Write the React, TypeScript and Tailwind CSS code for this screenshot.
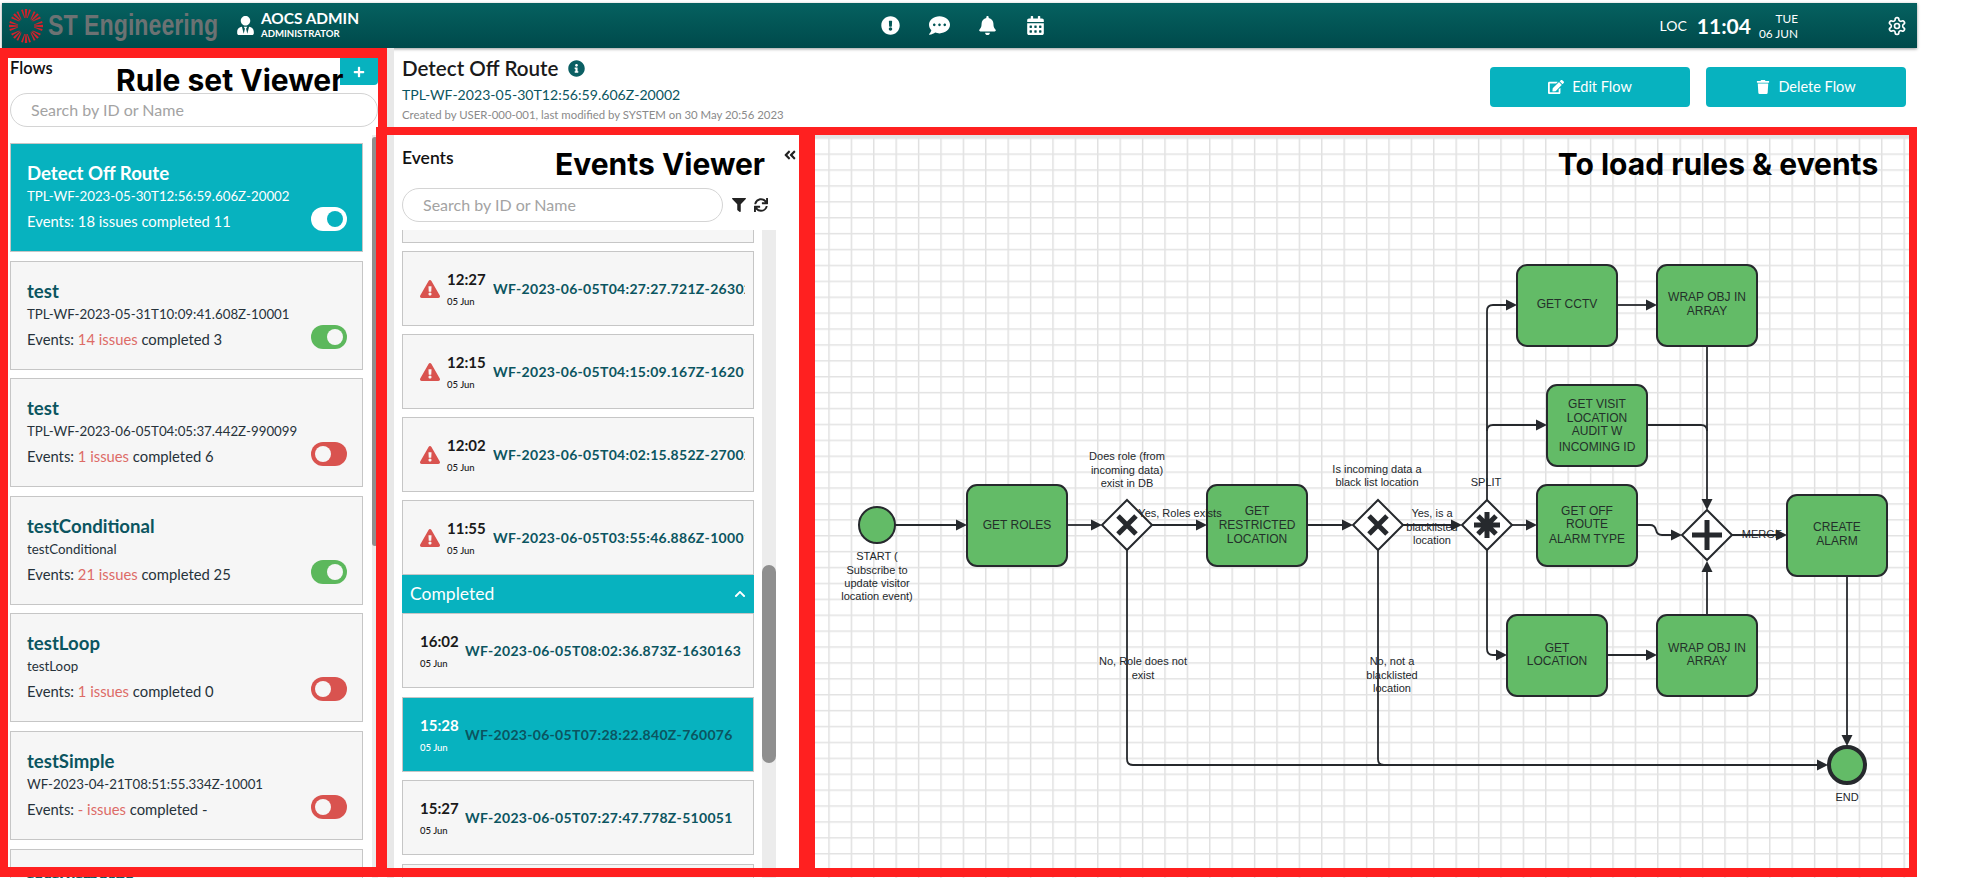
import { FaAngleDoubleLeft, FaBell, FaCalendarAlt, FaChevronUp, FaCommentDots, FaEdit, FaExclamationCircle, FaExclamationTriangle, FaFilter, FaInfoCircle, FaPlus, FaSync, FaTrash, FaUserTie } from "react-icons/fa";
import { LuSettings } from "react-icons/lu";

type Flow = {
  title: string;
  id: string;
  issues: string;
  completed: string;
  on: boolean;
  active?: boolean;
};

const flows: Flow[] = [
  { title: "Detect Off Route", id: "TPL-WF-2023-05-30T12:56:59.606Z-20002", issues: "18", completed: "11", on: true, active: true },
  { title: "test", id: "TPL-WF-2023-05-31T10:09:41.608Z-10001", issues: "14", completed: "3", on: true },
  { title: "test", id: "TPL-WF-2023-06-05T04:05:37.442Z-990099", issues: "1", completed: "6", on: false },
  { title: "testConditional", id: "testConditional", issues: "21", completed: "25", on: true },
  { title: "testLoop", id: "testLoop", issues: "1", completed: "0", on: false },
  { title: "testSimple", id: "WF-2023-04-21T08:51:55.334Z-10001", issues: "-", completed: "-", on: false },
  { title: "testBitmerge", id: "testBitmerge", issues: "1", completed: "0", on: false },
];

const issueEvents = [
  { time: "12:27", id: "WF-2023-06-05T04:27:27.721Z-26302" },
  { time: "12:15", id: "WF-2023-06-05T04:15:09.167Z-16201" },
  { time: "12:02", id: "WF-2023-06-05T04:02:15.852Z-27002" },
  { time: "11:55", id: "WF-2023-06-05T03:55:46.886Z-10001" },
];

const doneEvents = [
  { time: "16:02", id: "WF-2023-06-05T08:02:36.873Z-1630163" },
  { time: "15:28", id: "WF-2023-06-05T07:28:22.840Z-760076", active: true },
  { time: "15:27", id: "WF-2023-06-05T07:27:47.778Z-510051" },
  { time: "15:27", id: "WF-2023-06-05T07:27:11.204Z-510050" },
];

const boxes = [
  { x: 967, y: 485, h: 81, w: 100, lines: ["GET ROLES"], ys: [525] },
  { x: 1207, y: 485, h: 81, w: 100, lines: ["GET", "RESTRICTED", "LOCATION"], ys: [511, 525, 539] },
  { x: 1517, y: 265, h: 81, w: 100, lines: ["GET CCTV"], ys: [304] },
  { x: 1657, y: 265, h: 81, w: 100, lines: ["WRAP OBJ IN", "ARRAY"], ys: [297, 311] },
  { x: 1547, y: 385, h: 81, w: 100, lines: ["GET VISIT", "LOCATION", "AUDIT W", "INCOMING ID"], ys: [404, 418, 431, 447] },
  { x: 1537, y: 485, h: 81, w: 100, lines: ["GET OFF", "ROUTE", "ALARM TYPE"], ys: [511, 524, 539] },
  { x: 1507, y: 615, h: 81, w: 100, lines: ["GET", "LOCATION"], ys: [648, 661] },
  { x: 1657, y: 615, h: 81, w: 100, lines: ["WRAP OBJ IN", "ARRAY"], ys: [648, 661] },
  { x: 1787, y: 495, h: 81, w: 100, lines: ["CREATE", "ALARM"], ys: [527, 541] },
];

const labels = [
  { x: 877, ys: [556, 570, 583, 596], lines: ["START (", "Subscribe to", "update visitor", "location event)"] },
  { x: 1127, ys: [456, 470, 483], lines: ["Does role (from", "incoming data)", "exist in DB"] },
  { x: 1180, ys: [513], lines: ["Yes, Roles exists"] },
  { x: 1143, ys: [661, 675], lines: ["No, Role does not", "exist"] },
  { x: 1377, ys: [469, 482], lines: ["Is incoming data a", "black list location"] },
  { x: 1392, ys: [661, 675, 688], lines: ["No, not a", "blacklisted", "location"] },
  { x: 1432, ys: [513, 527, 540], lines: ["Yes, is a", "blacklisted", "location"] },
  { x: 1486, ys: [482], lines: ["SPLIT"] },
  { x: 1762, ys: [534], lines: ["MERGE"] },
  { x: 1847, ys: [797], lines: ["END"] },
];

const edges = [
  "M895 525H957",
  "M1067 525H1092",
  "M1152 525H1197",
  "M1308 525H1343",
  "M1403 525H1452",
  "M1127 550V759Q1127 765 1133 765H1818",
  "M1378 550V759Q1378 765 1384 765H1500",
  "M1487 500V311Q1487 305 1493 305H1507",
  "M1487 431Q1487 425 1493 425H1537",
  "M1512 525H1527",
  "M1487 550V649Q1487 655 1493 655H1497",
  "M1617 305H1647",
  "M1707 346V500",
  "M1647 425H1701Q1707 425 1707 431",
  "M1637 525H1650Q1655 525 1656 530Q1657 535 1662 535H1672",
  "M1607 655H1647",
  "M1707 615V571",
  "M1732 535H1777",
  "M1847 576V736",
];

// arrow tips: x, y, direction
const arrows: [number, number, string][] = [
  [967, 525, "r"], [1102, 525, "r"], [1207, 525, "r"], [1353, 525, "r"], [1462, 525, "r"],
  [1828, 765, "r"], [1517, 305, "r"], [1547, 425, "r"], [1537, 525, "r"], [1507, 655, "r"],
  [1657, 305, "r"], [1707, 510, "d"], [1682, 535, "r"], [1657, 655, "r"], [1707, 561, "u"],
  [1787, 535, "r"], [1847, 746, "d"],
];

function arrowPoints(x: number, y: number, dir: string) {
  if (dir === "r") return `${x},${y} ${x - 11},${y - 5.5} ${x - 11},${y + 5.5}`;
  if (dir === "d") return `${x},${y} ${x - 5.5},${y - 11} ${x + 5.5},${y - 11}`;
  return `${x},${y} ${x - 5.5},${y + 11} ${x + 5.5},${y + 11}`;
}

function Logo() {
  const spokes = Array.from({ length: 8 }, (_, i) => i * 45);
  return (
    <svg width="34" height="34" viewBox="-17 -17 34 34" className="shrink-0">
      {spokes.map((deg) => (
        <g key={deg} transform={`rotate(${deg})`} fill="#d8202a">
          <path d="M-1.6 -8 L-5 -16 L-3.1 -16.6 L-0.9 -8Z" />
          <path d="M-0.5 -8 L-1.2 -17 L1.2 -17 L0.5 -8Z" />
          <path d="M1.6 -8 L5 -16 L3.1 -16.6 L0.9 -8Z" />
        </g>
      ))}
    </svg>
  );
}

function Toggle({ on, active }: { on: boolean; active?: boolean }) {
  if (active) {
    return (
      <div className="flex h-[24px] w-[36px] items-center justify-end rounded-full bg-white pr-[4px]">
        <div className="h-[16px] w-[16px] rounded-full bg-[#07b2bf]" />
      </div>
    );
  }
  return (
    <div className={on ? "flex h-[24px] w-[36px] items-center justify-end rounded-full bg-[#5cb85c] pr-[4px]" : "flex h-[24px] w-[36px] items-center justify-start rounded-full bg-[#d9534f] pl-[4px]"}>
      <div className="h-[16px] w-[16px] rounded-full bg-[#f6f6f6]" />
    </div>
  );
}

function FlowCard({ flow }: { flow: Flow }) {
  const a = flow.active;
  return (
    <div className={a ? "flex h-[109px] shrink-0 justify-between border border-[#c6c6c6] bg-[#07b2bf] pl-[16px] pr-[15px] pt-[18px] text-white" : "flex h-[109px] shrink-0 justify-between border border-[#c6c6c6] bg-[#f6f6f6] pl-[16px] pr-[15px] pt-[18px] text-[#26323a]"}>
      <div className="whitespace-nowrap">
        <div className={a ? "text-[18.6px] leading-[22px] font-bold text-white" : "text-[18.6px] leading-[22px] font-bold text-[#0b5560]"}>{flow.title}</div>
        <div className="mt-[3px] text-[13.3px] leading-[18px]">{flow.id}</div>
        <div className="mt-[7px] text-[14.8px] leading-[18px]">
          Events: <span className={a ? "" : "text-[#dd6b66]"}>{flow.issues} issues</span> completed {flow.completed}
        </div>
      </div>
      <div className="pt-[45px]">
        <Toggle on={flow.on} active={a} />
      </div>
    </div>
  );
}

function SearchBox({ className }: { className: string }) {
  return (
    <div className={className}>
      <span className="text-[16px] text-[#a3a3a3]">Search by ID or Name</span>
    </div>
  );
}

function EventCard({ time, id, warn, active }: { time: string; id: string; warn?: boolean; active?: boolean }) {
  return (
    <div className={active ? "flex h-[75px] shrink-0 items-center border border-[#c6c6c6] bg-[#07b2bf] pl-[17px] pr-[8px]" : "flex h-[75px] shrink-0 items-center border border-[#c6c6c6] bg-[#f6f6f6] pl-[17px] pr-[8px]"}>
      {warn ? <FaExclamationTriangle className="mr-[7px] shrink-0 text-[20px] text-[#d9534f]" /> : null}
      <div className={active ? "w-[45px] shrink-0 text-white" : warn ? "w-[46px] shrink-0 text-[#1a1a1a]" : "w-[45px] shrink-0 text-[#1a1a1a]"}>
        <div className="text-[15px] leading-[20px] font-bold">{time}</div>
        <div className="mt-[7px] text-[9.5px] leading-[12px] font-medium">05 Jun</div>
      </div>
      <div className="min-w-0 overflow-hidden text-[14px] font-bold whitespace-nowrap text-[#0b5560] tracking-[0.3px]">{id}</div>
    </div>
  );
}

function Diagram() {
  return (
    <svg width="1094" height="743" viewBox="815 135 1094 743" className="block" fontFamily="'Liberation Sans', sans-serif">
      <defs>
        <pattern id="grid" x="828.3" y="137.5" width="22.4" height="15.9" patternUnits="userSpaceOnUse">
          <rect x="0" y="0" width="1.4" height="15.9" fill="#dedede" />
          <rect x="0" y="0" width="22.4" height="1.5" fill="#e3e3e3" />
        </pattern>
      </defs>
      <rect x="815" y="135" width="1094" height="743" fill="#fff" />
      <rect x="815" y="135" width="1094" height="743" fill="url(#grid)" />
      <rect x="815" y="135" width="1094" height="3" fill="#e4e4e4" />

      {edges.map((d) => (
        <path key={d} d={d} fill="none" stroke="#26292d" strokeWidth="1.8" />
      ))}
      {arrows.map(([x, y, dir]) => (
        <polygon key={`${x}-${y}`} points={arrowPoints(x, y, dir)} fill="#26292d" />
      ))}

      {boxes.map((b) => (
        <g key={`${b.x}-${b.y}`}>
          <rect x={b.x} y={b.y} width={b.w} height={b.h} rx="10" fill="#63bb67" stroke="#26292d" strokeWidth="2" />
          {b.lines.map((line, i) => (
            <text key={line} x={b.x + b.w / 2} y={b.ys[i] + 4} textAnchor="middle" fontSize="12" fill="#23302a">{line}</text>
          ))}
        </g>
      ))}

      <circle cx="877" cy="525" r="18" fill="#63bb67" stroke="#26292d" strokeWidth="2" />
      <circle cx="1847" cy="765" r="18" fill="#63bb67" stroke="#26292d" strokeWidth="4" />

      {/* gateways */}
      <polygon points="1127,500 1152,525 1127,550 1102,525" fill="#fff" stroke="#26292d" strokeWidth="2" />
      <path d="M1118 516L1136 534M1136 516L1118 534" stroke="#26292d" strokeWidth="5" />
      <polygon points="1378,500 1403,525 1378,550 1353,525" fill="#fff" stroke="#26292d" strokeWidth="2" />
      <path d="M1369 516L1387 534M1387 516L1369 534" stroke="#26292d" strokeWidth="5" />
      <polygon points="1487,500 1512,525 1487,550 1462,525" fill="#fff" stroke="#26292d" strokeWidth="2" />
      <path d="M1487 512V538M1474 525H1500M1478 516L1496 534M1496 516L1478 534" stroke="#26292d" strokeWidth="5" />
      <polygon points="1707,510 1732,535 1707,560 1682,535" fill="#fff" stroke="#26292d" strokeWidth="2" />
      <path d="M1692 535H1722M1707 520V550" stroke="#26292d" strokeWidth="5" />

      {labels.map((l) =>
        l.lines.map((line, i) => (
          <text key={`${l.x}-${line}`} x={l.x} y={l.ys[i] + 4} textAnchor="middle" fontSize="11" fill="#23272b">{line}</text>
        )),
      )}

      <text x="1718" y="175" textAnchor="middle" fontSize="30" fontWeight="700" fontFamily="Inter, sans-serif" fill="#000">To load rules &amp; events</text>
    </svg>
  );
}

export default function App() {
  return (
    <div className="relative h-[878px] w-[1962px] overflow-hidden bg-white font-['Lato',sans-serif]">
      <div className="w-[1917px] pt-[3px]">
        <div className="ml-[2px] flex h-[45px] items-center bg-gradient-to-b from-[#066160] to-[#004a4b] text-white shadow-[0_1px_3px_rgba(0,0,0,0.4)]">
          <div className="ml-[7px] flex w-[226px] items-center">
            <Logo />
            <span className="ml-[5px] origin-left scale-x-[0.8] font-['Liberation_Sans',sans-serif] text-[29px] font-bold whitespace-nowrap text-[#6c7273]">ST Engineering</span>
          </div>
          <FaUserTie className="ml-[1px] text-[19px]" />
          <div className="ml-[6px] w-[620px]">
            <div className="text-[15.4px] leading-[17px] font-bold">AOCS ADMIN</div>
            <div className="text-[9.6px] leading-[14px] font-bold">ADMINISTRATOR</div>
          </div>
          <div className="flex items-center gap-[28.5px] text-[19px]">
            <FaExclamationCircle />
            <FaCommentDots className="text-[21px]" />
            <FaBell />
            <FaCalendarAlt />
          </div>
          <div className="ml-auto flex items-center pr-[10px]">
            <span className="text-[14px]">LOC</span>
            <span className="ml-[10px] text-[21px] font-bold">11:04</span>
            <div className="ml-[8px] text-right text-[11.8px] leading-[15px]">
              <div>TUE</div>
              <div>06 JUN</div>
            </div>
            <LuSettings className="ml-[89px] text-[20px]" />
          </div>
        </div>

        <div className="flex h-[830px]">
          {/* flows */}
          <div className="flex w-[387px] shrink-0 flex-col pl-[10px] pr-[9px]">
            <div className="flex h-[45px] shrink-0 items-start justify-between pt-[10px]">
              <span className="text-[16.5px] leading-[20px] font-semibold text-[#111]">Flows</span>
              <div className="flex h-[27px] w-[38px] items-center justify-center rounded-br-[4px] bg-[#07b2bf] text-[12px] text-white">
                <FaPlus />
              </div>
            </div>
            <SearchBox className="flex h-[34px] shrink-0 items-center rounded-full border border-[#d4d4d4] pl-[20px]" />
            <div className="mt-[8px] flex min-h-0 flex-1 gap-[9px]">
              <div className="flex w-[353px] shrink-0 flex-col gap-[8.6px] overflow-hidden pt-[8px]">
                {flows.map((f) => (
                  <FlowCard key={f.id + f.title} flow={f} />
                ))}
              </div>
              <div className="w-[6px] shrink-0 bg-[#ececec] pt-[2px]">
                <div className="h-[409px] rounded-full bg-[#8f8f8f]" />
              </div>
            </div>
          </div>

          <div className="w-[7px] shrink-0 bg-[#e8e8e8]" />

          <div className="flex min-w-0 flex-1 flex-col">
            {/* flow details */}
            <div className="flex h-[79px] shrink-0 justify-between pl-[8px] pr-[11px]">
              <div className="pt-[8px]">
                <div className="flex items-center text-[20.6px] leading-[24px] font-semibold text-[#1a1a1a]">
                  Detect Off Route
                  <FaInfoCircle className="ml-[9px] text-[17px] text-[#0b5f63]" />
                </div>
                <div className="mt-[6px] text-[14.1px] leading-[18px] text-[#0b5560]">TPL-WF-2023-05-30T12:56:59.606Z-20002</div>
                <div className="mt-[3px] text-[11.4px] leading-[16px] text-[#8a8a8a]">Created by USER-000-001, last modified by SYSTEM on 30 May 20:56 2023</div>
              </div>
              <div className="flex gap-[16px] pt-[19px] text-[14.5px] text-white">
                <button type="button" className="flex h-[40px] w-[200px] items-center justify-center gap-[8px] rounded-[4px] bg-[#07b2bf]">
                  <FaEdit className="text-[16px]" />
                  Edit Flow
                </button>
                <button type="button" className="flex h-[40px] w-[200px] items-center justify-center gap-[8px] rounded-[4px] bg-[#07b2bf]">
                  <FaTrash className="text-[14px]" />
                  Delete Flow
                </button>
              </div>
            </div>

            <div className="flex min-h-0 flex-1">
              {/* events */}
              <div className="flex w-[405px] shrink-0 flex-col pl-[8px] pr-[2px] pt-[8px]">
                <div className="flex h-[53px] shrink-0 items-start justify-between pt-[13px]">
                  <span className="text-[17.5px] leading-[20px] font-semibold text-[#111]">Events</span>
                  <FaAngleDoubleLeft className="text-[14px] text-[#222]" />
                </div>
                <div className="flex h-[34px] shrink-0 items-center">
                  <SearchBox className="flex h-[34px] w-[321px] items-center rounded-full border border-[#d4d4d4] pl-[20px]" />
                  <FaFilter className="ml-[9px] text-[14px] text-[#222]" />
                  <FaSync className="ml-[8px] text-[14px] text-[#222]" />
                </div>
                <div className="mt-[8px] flex min-h-0 flex-1 gap-[8px]">
                  <div className="flex w-[352px] shrink-0 flex-col overflow-hidden">
                    <div className="flex shrink-0 flex-col gap-[8px]">
                      <div className="h-[13px] border-x border-b border-[#c6c6c6] bg-[#f6f6f6]" />
                      {issueEvents.map((e) => (
                        <EventCard key={e.id} time={e.time} id={e.id} warn />
                      ))}
                    </div>
                    <div className="flex h-[38px] shrink-0 items-center justify-between bg-[#07b2bf] pl-[8px] pr-[8px] text-[17.5px] text-white">
                      Completed
                      <FaChevronUp className="text-[12px]" />
                    </div>
                    <div className="flex shrink-0 flex-col gap-[8.5px]">
                      {doneEvents.map((e) => (
                        <EventCard key={e.id} time={e.time} id={e.id} active={e.active} />
                      ))}
                    </div>
                  </div>
                  <div className="w-[14px] shrink-0 bg-[#ececec] pt-[335px]">
                    <div className="h-[198px] rounded-full bg-[#8f8f8f]" />
                  </div>
                </div>
              </div>

              <div className="pl-[16px] pt-[8px]">
                <Diagram />
              </div>
            </div>
          </div>
        </div>
      </div>

      {/* review annotations drawn over the screen */}
      <div className="pointer-events-none absolute left-0 top-[48px] h-[829px] w-[387px] border-y-[10px] border-l-[8px] border-r-[9px] border-[#ff2020]" />
      <div className="pointer-events-none absolute left-[376px] top-[127px] h-[750px] w-[439px] border-y-[8px] border-b-[9px] border-l-[11px] border-r-[16px] border-[#ff2020]" />
      <div className="pointer-events-none absolute left-[799px] top-[127px] h-[750px] w-[1118px] border-y-[8px] border-b-[9px] border-l-[16px] border-r-[8px] border-[#ff2020]" />
      <div className="pointer-events-none absolute left-[116px] top-[62px] font-['Inter',sans-serif] text-[30px] leading-[36px] font-bold whitespace-nowrap text-black">Rule set Viewer</div>
      <div className="pointer-events-none absolute left-[555px] top-[146px] font-['Inter',sans-serif] text-[30px] leading-[36px] font-bold whitespace-nowrap text-black">Events Viewer</div>
    </div>
  );
}
